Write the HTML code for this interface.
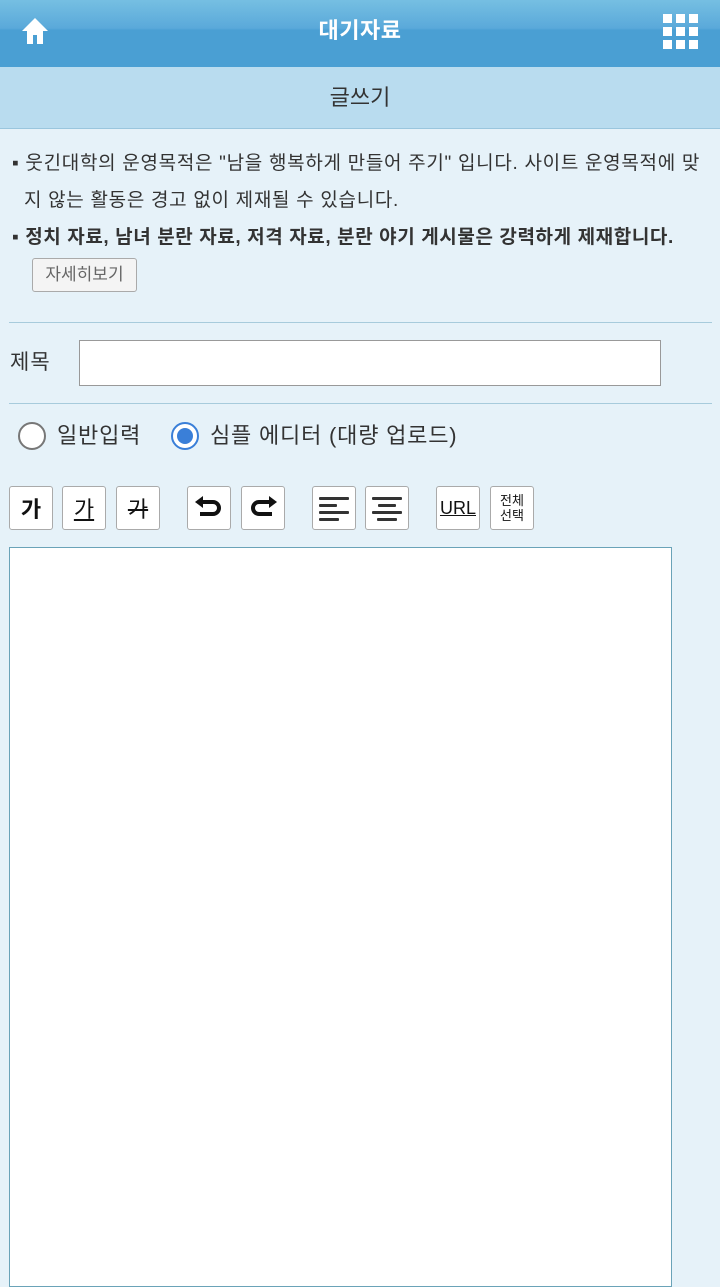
<!DOCTYPE html><html><head><meta charset="utf-8"><style>
*{margin:0;padding:0;box-sizing:border-box}
body{width:720px;height:1278px;overflow:hidden;background:#e6f2f9;font-family:"Liberation Sans","Noto Sans CJK KR",sans-serif;color:#333;position:relative}
.hd{position:absolute;left:0;top:0;width:720px;height:67px;background:linear-gradient(#76bfe2,#5aa9da 42%,#4a9fd3 45%,#4a9fd3);color:#fff;font-weight:bold;font-size:22px;text-align:center;line-height:62px;letter-spacing:0.5px}
.sub{position:absolute;left:0;top:67px;width:720px;height:62px;background:#b9dcef;border-bottom:1px solid #9ac6de;text-align:center;line-height:62px;font-size:22px;color:#333}
.a{position:absolute}
.t{font-size:19px;color:#333;line-height:37px;letter-spacing:0.7px}
.ln{position:absolute;left:9px;width:703px;height:1px;background:#a7cbdc}
.b{position:absolute;top:486px;width:44px;height:44px;background:#fff;border:1px solid #aaa;border-radius:3px;display:flex;align-items:center;justify-content:center;font-size:22px;color:#111}
</style></head><body>
<div class="hd">대기자료</div>
<svg class="a" style="left:21px;top:17px" width="28" height="28" viewBox="0 0 28 28"><path d="M14 1L1 14h5v13h6v-9h4v9h6V14h5z" fill="#fff"/></svg>
<svg class="a" style="left:663px;top:14px" width="36" height="36"><g fill="#fff"><rect x="0" y="0" width="9" height="9"/><rect x="13" y="0" width="9" height="9"/><rect x="26" y="0" width="9" height="9"/><rect x="0" y="13" width="9" height="9"/><rect x="13" y="13" width="9" height="9"/><rect x="26" y="13" width="9" height="9"/><rect x="0" y="26" width="9" height="9"/><rect x="13" y="26" width="9" height="9"/><rect x="26" y="26" width="9" height="9"/></g></svg>
<div class="sub">글쓰기</div>
<div class="a t" style="left:12px;top:145px;width:708px;white-space:nowrap">▪ 웃긴대학의 운영목적은 "남을 행복하게 만들어 주기" 입니다. 사이트 운영목적에 맞<br>&nbsp;&nbsp;지 않는 활동은 경고 없이 제재될 수 있습니다.</div>
<div class="a t" style="left:12px;top:219px;font-weight:bold;white-space:nowrap;letter-spacing:0.6px">▪ 정치 자료, 남녀 분란 자료, 저격 자료, 분란 야기 게시물은 강력하게 제재합니다.</div>
<div class="a" style="left:32px;top:258px;width:105px;height:34px;border:1px solid #aaa;border-radius:3px;background:#f4f4f4;font-size:17px;color:#666;text-align:center;line-height:32px">자세히보기</div>
<div class="ln" style="top:322px"></div>
<div class="a" style="left:10px;top:346px;font-size:21px;line-height:34px;letter-spacing:1px">제목</div>
<div class="a" style="left:79px;top:340px;width:582px;height:46px;background:#fff;border:1px solid #999"></div>
<div class="ln" style="top:403px"></div>
<div class="a" style="left:18px;top:422px;width:28px;height:28px;border-radius:50%;border:2px solid #777;background:#fff"></div>
<div class="a" style="left:57px;top:418px;font-size:22px;line-height:36px;letter-spacing:0.8px">일반입력</div>
<div class="a" style="left:171px;top:422px;width:28px;height:28px;border-radius:50%;border:2px solid #3a7fd8;background:#fff"><div style="margin:4px;width:16px;height:16px;border-radius:50%;background:#3a7fd8"></div></div>
<div class="a" style="left:210px;top:418px;font-size:22px;line-height:36px;letter-spacing:0.8px">심플 에디터 (대량 업로드)</div>
<div class="b" style="left:9px;font-weight:bold">가</div>
<div class="b" style="left:62px;text-decoration:underline;font-weight:normal">가</div>
<div class="b" style="left:116px;text-decoration:line-through">가</div>
<div class="b" style="left:187px"><svg width="30" height="24" viewBox="0 0 30 24"><path d="M9 6h10a6 6 0 0 1 0 12H6" fill="none" stroke="#111" stroke-width="4"/><path d="M1 6l8-6v12z" fill="#111"/></svg></div>
<div class="b" style="left:241px"><svg width="30" height="24" viewBox="0 0 30 24"><path d="M21 6H11a6 6 0 0 0 0 12h13" fill="none" stroke="#111" stroke-width="4"/><path d="M29 6l-8-6v12z" fill="#111"/></svg></div>
<div class="b" style="left:312px"><svg width="32" height="28"><g fill="#333"><rect x="1" y="3" width="30" height="3" rx="1"/><rect x="1" y="10" width="18" height="3" rx="1"/><rect x="1" y="17" width="30" height="3" rx="1"/><rect x="1" y="24" width="20" height="3" rx="1"/></g></svg></div>
<div class="b" style="left:365px"><svg width="32" height="28"><g fill="#333"><rect x="1" y="3" width="30" height="3" rx="1"/><rect x="7" y="10" width="18" height="3" rx="1"/><rect x="1" y="17" width="30" height="3" rx="1"/><rect x="6" y="24" width="20" height="3" rx="1"/></g></svg></div>
<div class="b" style="left:436px;font-size:18px;text-decoration:underline">URL</div>
<div class="b" style="left:490px;font-size:13px;line-height:15px;text-align:center">전체<br>선택</div>
<div class="a" style="left:9px;top:547px;width:663px;height:740px;background:#fff;border:1px solid #6aa3b8"></div>
</body></html>
